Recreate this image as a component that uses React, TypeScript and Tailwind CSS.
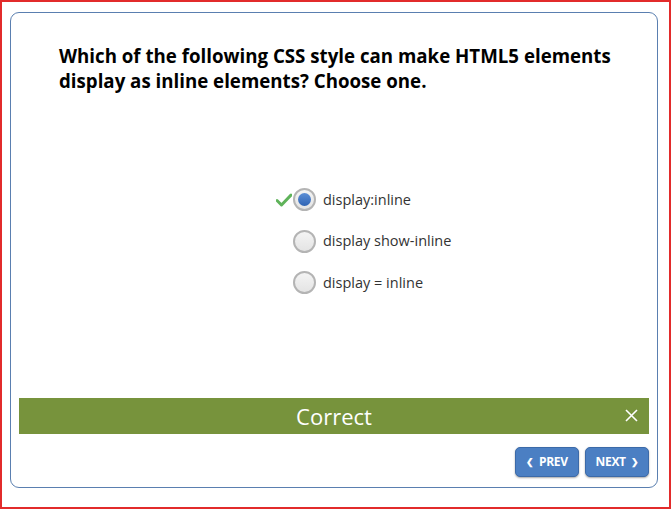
import React from 'react';

const options = [
  { id: 'a', label: 'display:inline', selected: true },
  { id: 'b', label: 'display show-inline', selected: false },
  { id: 'c', label: 'display = inline', selected: false },
];

function CheckMark() {
  return (
    <svg width="16" height="14" viewBox="0 0 16 14" className="block">
      <path d="M1 7.5 L5.5 12 L15 2" fill="none" stroke="#5fb35a" strokeWidth="3" strokeLinecap="round" strokeLinejoin="round" />
    </svg>
  );
}

function Radio({ selected }: { selected: boolean }) {
  return (
    <div className="w-[23px] h-[23px] rounded-full border-2 border-[#b4b4b4] bg-gradient-to-b from-[#f4f4f4] to-[#e4e4e4] flex items-center justify-center">
      {selected && (
        <div className="w-[13px] h-[13px] rounded-full bg-gradient-to-b from-[#5d8fd6] to-[#2f64b4]" />
      )}
    </div>
  );
}

function NavButton({ children }: { children: React.ReactNode }) {
  return (
    <button className="w-[64px] h-[30px] rounded-[5px] bg-[#4b7fc3] border border-[#3c6aa8] shadow-[0_1px_2px_rgba(0,0,0,0.35)] text-white text-[12px] font-bold flex items-center justify-center gap-[5px] tracking-[-0.3px]">
      {children}
    </button>
  );
}

export default function App() {
  return (
    <div className="w-[671px] h-[510px] bg-white font-['Open_Sans',sans-serif]">
      <div className="w-[671px] h-[509px] border-2 border-[#e22b2b] pt-[10px] pl-[8px]">
        <div className="w-[648px] h-[476px] border border-[#5a7fb0] rounded-[9px] flex flex-col">
          <h1 className="pt-[30px] pl-[48px] pr-[20px] text-[18.7px] leading-[25px] font-bold text-black">
            Which of the following CSS style can make HTML5 elements display as inline elements? Choose one.
          </h1>

          <div className="mt-[86px] flex flex-col items-start pl-[265px]">
            {options.map(opt => (
              <div key={opt.id} className="h-[41.5px] flex items-center">
                <div className="w-[17px] flex items-center">
                  {opt.selected && <CheckMark />}
                </div>
                <Radio selected={opt.selected} />
                <span className="ml-[7px] text-[14.5px] text-[#333]">{opt.label}</span>
              </div>
            ))}
          </div>

          <div className="mt-auto mx-[8px] h-[36px] bg-[#77933c] relative flex items-center justify-center">
            <span className="text-white text-[22px] font-normal">Correct</span>
            <svg width="13" height="13" viewBox="0 0 13 13" className="absolute right-[11px] top-[11px]">
              <path d="M1 1 L12 12 M12 1 L1 12" stroke="#fff" strokeWidth="1.6" />
            </svg>
          </div>

          <div className="mt-[13px] mb-[10px] mr-[8px] flex justify-end gap-[6px]">
            <NavButton>
              <span className="text-[9px]">&#10094;</span>
              PREV
            </NavButton>
            <NavButton>
              NEXT
              <span className="text-[9px]">&#10095;</span>
            </NavButton>
          </div>
        </div>
      </div>
    </div>
  );
}
